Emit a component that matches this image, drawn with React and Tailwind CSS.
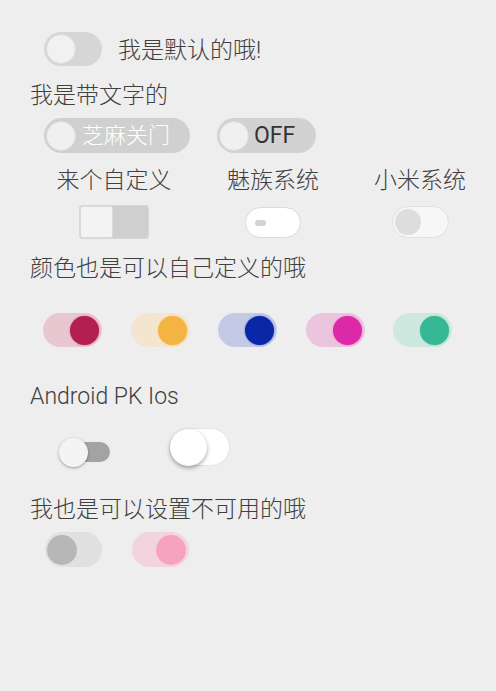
import React from "react";

const font = { fontFamily: 'Roboto, "Noto Sans CJK SC", sans-serif' };

function ColorToggle({ track, thumb }) {
  return (
    <div className={`w-[59px] h-[34px] rounded-full flex items-center justify-end pr-[3px] ${track}`}>
      <div className={`w-[29px] h-[29px] rounded-full ${thumb}`} />
    </div>
  );
}

export default function App() {
  return (
    <div
      className="w-[496px] h-[691px] bg-[#eeeeee] text-[#404040] font-light pl-[30px] pt-[32px] flex flex-col"
      style={font}
    >
      <div className="flex items-center h-[34px]">
        <div className="ml-[14px] w-[58px] h-[34px] rounded-full bg-[#d6d6d6] flex items-center pl-[2px]">
          <div className="w-[30px] h-[30px] rounded-full bg-[#f1f1f1] border border-[#dcdcdc]" />
        </div>
        <span className="ml-[16px] mt-[3px] text-[23px] leading-[30px]">我是默认的哦!</span>
      </div>

      <div className="mt-[15px] h-[30px] text-[23px] leading-[30px]">我是带文字的</div>

      <div className="mt-[7px] flex items-center h-[35px]">
        <div className="ml-[14px] w-[146px] h-[35px] rounded-full bg-[#d0d0d0] flex items-center pl-[2px]">
          <div className="w-[30px] h-[30px] rounded-full bg-[#f0f0f0] border border-[#dcdcdc]" />
          <span className="ml-[6px] text-white text-[22px] leading-[30px]">芝麻关门</span>
        </div>
        <div className="ml-[27px] w-[99px] h-[35px] rounded-full bg-[#d2d2d2] flex items-center pl-[2px]">
          <div className="w-[30px] h-[30px] rounded-full bg-[#f0f0f0] border border-[#dcdcdc]" />
          <span className="ml-[5px] text-[#333] font-normal text-[23px] leading-[30px]">OFF</span>
        </div>
      </div>

      <div className="mt-[13px] grid grid-cols-[168px_150px_144px] -ml-[30px] pl-[30px]">
        <div className="flex flex-col items-center">
          <div className="h-[30px] text-[23px] leading-[30px]">来个自定义</div>
          <div className="mt-[9px] w-[70px] h-[34px] rounded-[3px] bg-[#cfcfcf] border border-[#d8d8d8] flex">
            <div className="w-[33px] h-full rounded-[2px] bg-[#f3f3f3] border border-[#d9d9d9]" />
          </div>
        </div>
        <div className="flex flex-col items-center">
          <div className="h-[30px] text-[23px] leading-[30px]">魅族系统</div>
          <div className="mt-[11px] w-[56px] h-[31px] rounded-full bg-white border border-[#dadada] flex items-center pl-[9px]">
            <div className="w-[11px] h-[6px] rounded-full bg-[#d2d2d2]" />
          </div>
        </div>
        <div className="flex flex-col items-center">
          <div className="h-[30px] text-[23px] leading-[30px]">小米系统</div>
          <div className="mt-[10px] w-[57px] h-[32px] rounded-full bg-[#f7f7f7] border border-[#e2e2e2] flex items-center pl-[2px]">
            <div className="w-[26px] h-[26px] rounded-full bg-[#dddddd]" />
          </div>
        </div>
      </div>

      <div className="mt-[15px] h-[30px] text-[23px] leading-[30px]">颜色也是可以自己定义的哦</div>

      <div className="mt-[29px] ml-[13px] flex gap-[28.5px]">
        <ColorToggle track="bg-[#e8c7d1]" thumb="bg-[#b41f52] shadow-[0_0_2px_#d05b83]" />
        <ColorToggle track="bg-[#f3e5cf]" thumb="bg-[#f3b443] shadow-[0_0_2px_#f6c874]" />
        <ColorToggle track="bg-[#c4c9e5]" thumb="bg-[#0a27a6] shadow-[0_0_2px_#4f66cc]" />
        <ColorToggle track="bg-[#ebc4de]" thumb="bg-[#dd29a8] shadow-[0_0_2px_#ee6cc6]" />
        <ColorToggle track="bg-[#cee8df]" thumb="bg-[#35b893] shadow-[0_0_2px_#6fd0b3]" />
      </div>

      <div className="mt-[35px] h-[30px] text-[23px] leading-[30px]">Android PK Ios</div>

      <div className="mt-[15px] flex items-center h-[40px]">
        <div className="ml-[29px] mt-[10px] relative w-[51px] h-[29px] flex items-center">
          <div className="ml-[14px] w-[37px] h-[20px] rounded-full bg-[#a3a3a3]" />
          <div className="absolute left-0 top-0 w-[29px] h-[29px] rounded-full bg-[#f4f4f4] shadow-[0_1px_3px_rgba(0,0,0,0.35)]" />
        </div>
        <div className="ml-[59px] w-[61px] h-[38px] rounded-full bg-white border border-[#e4e4e4] flex items-center">
          <div className="w-[37px] h-[37px] rounded-full bg-white shadow-[0_2px_4px_rgba(0,0,0,0.35)]" />
        </div>
      </div>

      <div className="mt-[28px] h-[30px] text-[23px] leading-[30px]">我也是可以设置不可用的哦</div>

      <div className="mt-[7px] ml-[15px] flex gap-[30px]">
        <div className="w-[57px] h-[35px] rounded-full bg-[#e0e0e0] flex items-center pl-[2px]">
          <div className="w-[30px] h-[30px] rounded-full bg-[#b7b7b7]" />
        </div>
        <div className="w-[57px] h-[35px] rounded-full bg-[#f2d3de] flex items-center justify-end pr-[3px]">
          <div className="w-[30px] h-[30px] rounded-full bg-[#f5a3bf]" />
        </div>
      </div>
    </div>
  );
}
